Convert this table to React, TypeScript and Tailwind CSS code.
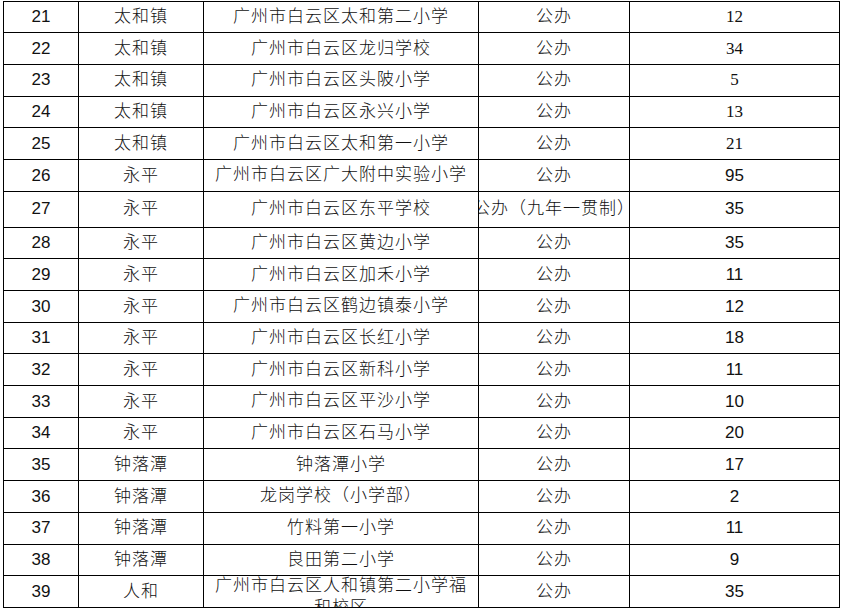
import * as React from "react";

type Row = {
  no: number;
  town: string;
  school: string;
  kind: string;
  count: number;
  tall?: boolean;
};

const rows: Row[] = [
  { no: 21, town: "太和镇", school: "广州市白云区太和第二小学", kind: "公办", count: 12 },
  { no: 22, town: "太和镇", school: "广州市白云区龙归学校", kind: "公办", count: 34 },
  { no: 23, town: "太和镇", school: "广州市白云区头陂小学", kind: "公办", count: 5 },
  { no: 24, town: "太和镇", school: "广州市白云区永兴小学", kind: "公办", count: 13 },
  { no: 25, town: "太和镇", school: "广州市白云区太和第一小学", kind: "公办", count: 21 },
  { no: 26, town: "永平", school: "广州市白云区广大附中实验小学", kind: "公办", count: 95 },
  { no: 27, town: "永平", school: "广州市白云区东平学校", kind: "公办（九年一贯制）", count: 35, tall: true },
  { no: 28, town: "永平", school: "广州市白云区黄边小学", kind: "公办", count: 35 },
  { no: 29, town: "永平", school: "广州市白云区加禾小学", kind: "公办", count: 11 },
  { no: 30, town: "永平", school: "广州市白云区鹤边镇泰小学", kind: "公办", count: 12 },
  { no: 31, town: "永平", school: "广州市白云区长红小学", kind: "公办", count: 18 },
  { no: 32, town: "永平", school: "广州市白云区新科小学", kind: "公办", count: 11 },
  { no: 33, town: "永平", school: "广州市白云区平沙小学", kind: "公办", count: 10 },
  { no: 34, town: "永平", school: "广州市白云区石马小学", kind: "公办", count: 20 },
  { no: 35, town: "钟落潭", school: "钟落潭小学", kind: "公办", count: 17 },
  { no: 36, town: "钟落潭", school: "龙岗学校（小学部）", kind: "公办", count: 2 },
  { no: 37, town: "钟落潭", school: "竹料第一小学", kind: "公办", count: 11 },
  { no: 38, town: "钟落潭", school: "良田第二小学", kind: "公办", count: 9 },
  { no: 39, town: "人和", school: "广州市白云区人和镇第二小学福和校区", kind: "公办", count: 35 },
];

const cjk = "font-['Liberation_Sans','Noto_Sans_CJK_SC',sans-serif]";
const cell =
  "box-border h-full flex justify-center border-r-[1.5px] border-black overflow-hidden text-[#111]";

export default function App() {
  return (
    <div className="w-[843px] h-[612px] bg-white overflow-hidden">
      <div className="ml-[3px] mt-[0.5px] w-[837px] border-l-[1.5px] border-t-[1.5px] border-black">
        {rows.map((r) => {
          // the last school name wraps and spills out of its row
          const wraps = r.school.length > 14;
          return (
            <div
              key={r.no}
              className={`flex box-border border-b-[1.5px] border-black ${r.tall ? "h-[36px]" : "h-[31.7px]"}`}
            >
              <div className={`${cell} items-center w-[75px] font-['Liberation_Sans',sans-serif] text-[17px]`}>
                {r.no}
              </div>
              <div className={`${cell} items-center w-[125px] ${cjk} font-light text-[17px] tracking-[1px]`}>
                {r.town}
              </div>
              <div
                className={`${cell} ${wraps ? "items-start" : "items-center"} w-[275px] px-[4px] ${cjk} font-light text-[17px] tracking-[1px] leading-[22px] text-center`}
              >
                <span className={wraps ? "block -mt-[1px]" : "block"}>{r.school}</span>
              </div>
              <div
                className={`${cell} items-center w-[151px] ${cjk} font-light text-[17px] tracking-[1px] whitespace-nowrap`}
              >
                {r.kind}
              </div>
              <div
                className={`${cell} items-center w-[210px] text-[17px] ${
                  r.no <= 25 ? "font-['Liberation_Serif',serif]" : "font-['Liberation_Sans',sans-serif]"
                }`}
              >
                {r.count}
              </div>
            </div>
          );
        })}
      </div>
    </div>
  );
}
